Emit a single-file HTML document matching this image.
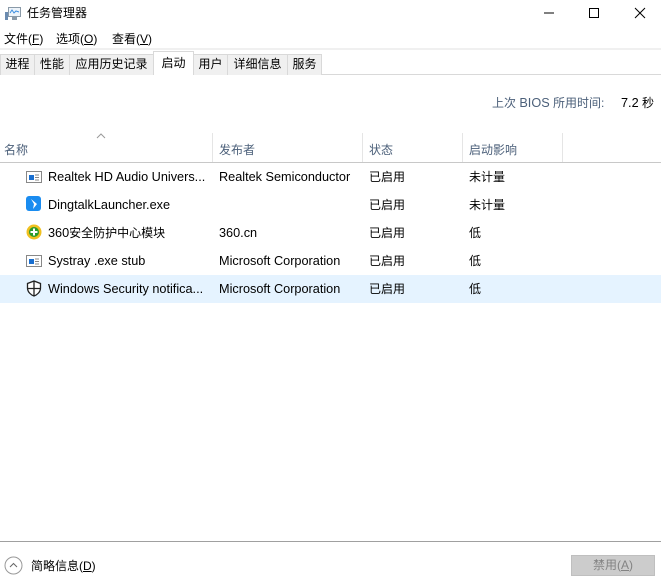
<!DOCTYPE html>
<html><head><meta charset="utf-8"><style>
*{margin:0;padding:0;box-sizing:border-box}
body{width:661px;height:587px;background:#fff;font-family:"Liberation Sans","Noto Sans CJK SC",sans-serif;font-size:12px;color:#000;position:relative;overflow:hidden}
.a{position:absolute;white-space:nowrap;line-height:16px}
.r{font-size:12.7px}
.tab{position:absolute;top:54px;height:21px;background:#f0f0f0;border:1px solid #d9d9d9;border-bottom:none;line-height:19px;text-align:center;font-size:12px}
.hd{color:#4c607a}
.sep{position:absolute;top:133px;width:1px;height:29px;background:#e5e5e5}
</style></head><body>
<svg class="a" style="left:5px;top:6px" width="16" height="16" viewBox="0 0 16 16"><rect x="0" y="6" width="3" height="8" fill="#6b8bb0"/><rect x="3.5" y="1.5" width="12" height="9" fill="#eef4fa" stroke="#8a9aa8"/><polyline points="5,7 7,4 9,7 11,5 14,6" fill="none" stroke="#3d8fe0" stroke-width="1"/><rect x="7" y="11" width="5" height="3" fill="#8a9aa8"/></svg>
<div class="a" style="left:27px;top:5px;font-size:12px">任务管理器</div>
<svg class="a" style="left:540px;top:6px" width="110" height="14"><line x1="4" y1="7" x2="14" y2="7" stroke="#000"/><rect x="49.5" y="2.5" width="9" height="9" fill="none" stroke="#000"/><path d="M95 2L105 12M105 2L95 12" stroke="#000"/></svg>
<div class="a" style="left:4px;top:31px">文件(<u>F</u>)</div>
<div class="a" style="left:56px;top:31px">选项(<u>O</u>)</div>
<div class="a" style="left:112px;top:31px">查看(<u>V</u>)</div>
<div class="a" style="left:0;top:48px;width:661px;height:2px;background:#f0f0f0"></div>
<div class="a" style="left:0;top:74px;width:661px;height:1px;background:#d9d9d9"></div>
<div class="tab" style="left:0;width:35px">进程</div>
<div class="tab" style="left:34px;width:36px">性能</div>
<div class="tab" style="left:69px;width:85px">应用历史记录</div>
<div class="tab" style="left:153px;top:51px;height:24px;width:41px;background:#fff;line-height:22px">启动</div>
<div class="tab" style="left:193px;width:35px">用户</div>
<div class="tab" style="left:227px;width:61px">详细信息</div>
<div class="tab" style="left:287px;width:35px">服务</div>
<div class="a" style="left:492px;top:95px;color:#4c607a"><span>上次 </span><span class="r">BIOS</span><span> 所用时间:</span></div>
<div class="a" style="left:621px;top:95px"><span class="r">7.2</span> 秒</div>
<svg class="a" style="left:96px;top:133px" width="10" height="6"><polyline points="1,5 5,1 9,5" fill="none" stroke="#999"/></svg>
<div class="a hd" style="left:4px;top:142px">名称</div>
<div class="a hd" style="left:219px;top:142px">发布者</div>
<div class="a hd" style="left:369px;top:142px">状态</div>
<div class="a hd" style="left:469px;top:142px">启动影响</div>
<div class="sep" style="left:212px"></div><div class="sep" style="left:362px"></div><div class="sep" style="left:462px"></div><div class="sep" style="left:562px"></div>
<div class="a" style="left:0;top:162px;width:661px;height:1px;background:#c8c8c8"></div>
<div class="a" style="left:0;top:275px;width:661px;height:28px;background:#e5f3ff"></div>
<svg class="a" style="left:26px;top:170px" width="16" height="14"><rect x="0.5" y="1.5" width="15" height="11" fill="#fff" stroke="#888"/><rect x="3" y="5" width="5" height="5" fill="#1a6fd0"/><line x1="9" y1="5" x2="13" y2="5" stroke="#888"/><line x1="9" y1="7.5" x2="13" y2="7.5" stroke="#888"/><line x1="9" y1="10" x2="13" y2="10" stroke="#888"/></svg>
<svg class="a" style="left:26px;top:196px" width="16" height="16"><rect x="0" y="0" width="15" height="15" rx="3" fill="#1a8cf0"/><path d="M5 3L11 8L7 13L8 8Z" fill="#fff"/></svg>
<svg class="a" style="left:26px;top:224px" width="16" height="16"><circle cx="8" cy="8" r="7.5" fill="#f0c020"/><circle cx="8" cy="8" r="5" fill="#2a9a2a"/><path d="M8 4.5V11.5M4.5 8H11.5" stroke="#fff" stroke-width="2"/></svg>
<svg class="a" style="left:26px;top:254px" width="16" height="14"><rect x="0.5" y="1.5" width="15" height="11" fill="#fff" stroke="#888"/><rect x="3" y="5" width="5" height="5" fill="#1a6fd0"/><line x1="9" y1="5" x2="13" y2="5" stroke="#888"/><line x1="9" y1="7.5" x2="13" y2="7.5" stroke="#888"/><line x1="9" y1="10" x2="13" y2="10" stroke="#888"/></svg>
<svg class="a" style="left:26px;top:280px" width="16" height="17"><path d="M8 1L1.5 3.5V8C1.5 12 5 15 8 16C11 15 14.5 12 14.5 8V3.5Z" fill="#fff" stroke="#222" stroke-width="1.3"/><path d="M8 1.5V15.5M2 8.5H14" stroke="#222" stroke-width="1.3"/></svg>
<div class="a r" style="left:48px;top:169px">Realtek HD Audio Univers...</div><div class="a r" style="left:219px;top:169px">Realtek Semiconductor</div><div class="a" style="left:369px;top:169px">已启用</div><div class="a" style="left:469px;top:169px">未计量</div>
<div class="a r" style="left:48px;top:197px">DingtalkLauncher.exe</div><div class="a" style="left:369px;top:197px">已启用</div><div class="a" style="left:469px;top:197px">未计量</div>
<div class="a" style="left:48px;top:225px"><span class="r">360</span>安全防护中心模块</div><div class="a r" style="left:219px;top:225px">360.cn</div><div class="a" style="left:369px;top:225px">已启用</div><div class="a" style="left:469px;top:225px">低</div>
<div class="a r" style="left:48px;top:253px">Systray .exe stub</div><div class="a r" style="left:219px;top:253px">Microsoft Corporation</div><div class="a" style="left:369px;top:253px">已启用</div><div class="a" style="left:469px;top:253px">低</div>
<div class="a r" style="left:48px;top:281px">Windows Security notifica...</div><div class="a r" style="left:219px;top:281px">Microsoft Corporation</div><div class="a" style="left:369px;top:281px">已启用</div><div class="a" style="left:469px;top:281px">低</div>
<div class="a" style="left:0;top:541px;width:661px;height:1px;background:#a0a0a0"></div>
<svg class="a" style="left:4px;top:556px" width="19" height="19"><circle cx="9.5" cy="9.5" r="8.5" fill="none" stroke="#999"/><polyline points="6,11 9.5,7.5 13,11" fill="none" stroke="#666"/></svg>
<div class="a" style="left:31px;top:558px">简略信息(<u>D</u>)</div>
<div class="a" style="left:571px;top:555px;width:84px;height:21px;background:#ccc;border:1px solid #bfbfbf;color:#838383;text-align:center;line-height:19px">禁用(<u>A</u>)</div>
</body></html>
